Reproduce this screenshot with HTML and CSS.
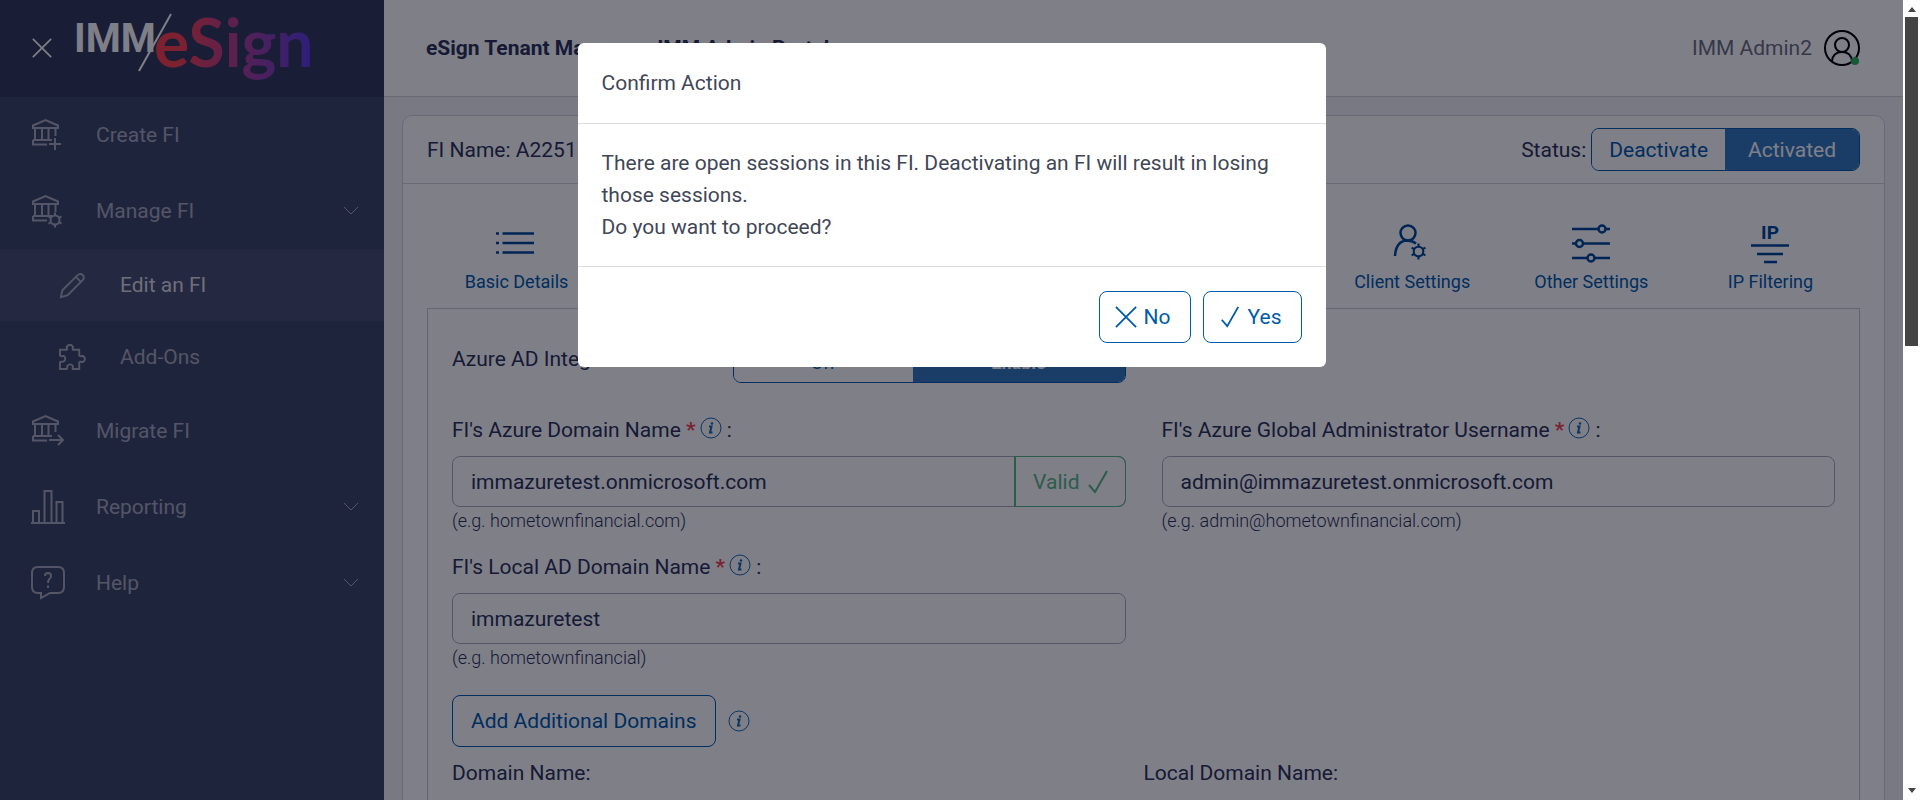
FILE: index.html
```
<!DOCTYPE html>
<html lang="en">
<head>
  <meta charset="UTF-8">
  <meta name="viewport" content="width=device-width, initial-scale=1.0">
  <title>eSign Tenant Manager - IMM Admin Portal</title>
  <link rel="stylesheet" href="styles.css">
</head>
<body>
  <!-- shared icons -->
  <svg class="defs" aria-hidden="true">
    <symbol id="bank" viewBox="0 0 34 34">
      <path d="M2 10V7.500L14.500 2 27 7.500V10ZM4 10.500V22M11 10.500V22M17.500 10.500V22M24.500 10.500V18M2 22H21M2 22V26.500H16"/>
    </symbol>
    <symbol id="chevron" viewBox="0 0 16 10"><path d="M1 1L8 8 15 1"/></symbol>
    <symbol id="check" viewBox="0 0 22 24"><path d="M2 15L8 22 20 1"/></symbol>
    <symbol id="cross" viewBox="0 0 24 24"><path d="M1 1L23 23M23 1L1 23"/></symbol>
    <symbol id="gear" viewBox="0 0 16 16">
      <circle cx="8" cy="8" r="4.500"/>
      <path d="M8 3.500V.5M8 12.500V15.500M4 5.800L1.500 4.300M12 5.800L14.500 4.300M4 10.200L1.500 11.700M12 10.200L14.500 11.700"/>
    </symbol>
    <symbol id="info" viewBox="0 0 22 22">
      <circle cx="11" cy="11" r="10"/>
      <path class="info-mark" d="M9 9.500H11.500L10 15.500H12.500"/>
      <circle class="info-dot" cx="12" cy="6.500" r="1.300"/>
    </symbol>
  </svg>

  <div class="app">
    <aside class="sidebar">
      <div class="brand">
        <button class="icon-btn" type="button" aria-label="Close menu">
          <svg class="close-icon"><use href="#cross"/></svg>
        </button>
        <svg class="logo" viewBox="0 0 236 70" role="img" aria-label="IMM/eSign">
          <defs>
            <linearGradient id="brandFill" gradientUnits="userSpaceOnUse" x1="80" y1="0" x2="232" y2="0">
              <stop offset="0" stop-color="#f8434e"/>
              <stop offset="0.150" stop-color="#f8434e"/>
              <stop offset="1" stop-color="#603fe0"/>
            </linearGradient>
          </defs>
          <text class="logo-imm" x="-2" y="39">IMM</text>
          <path class="logo-slash" d="M63 58L95 1"/>
          <text class="logo-esign" x="78" y="54">eSign</text>
        </svg>
      </div>
      <nav class="menu">
        <a class="item" href="#">
          <svg class="item-icon" viewBox="0 0 34 34"><use href="#bank" width="34" height="34"/><path d="M24 20V32M18 26H30"/></svg>
          <span>Create FI</span>
        </a>
        <a class="item" href="#">
          <svg class="item-icon" viewBox="0 0 34 34"><use href="#bank" width="34" height="34"/><use href="#gear" x="16" y="18" width="16" height="16"/></svg>
          <span>Manage FI</span>
          <svg class="chevron"><use href="#chevron"/></svg>
        </a>
        <a class="item sub active" href="#">
          <svg class="sub-icon" viewBox="0 0 28 28"><path d="M2 26L3.500 19 19 3.500Q22 .8 24.500 3 27 5.500 24.500 8.500L9 24ZM17.500 5L23 10.500"/></svg>
          <span>Edit an FI</span>
        </a>
        <a class="item sub" href="#">
          <svg class="sub-icon" viewBox="0 0 28 28"><path d="M1 6H8C9 5 8 4.500 8 3 10 0 13 0 14.500 3 14.500 4.500 13.500 5 14.500 6H21V12C22 13.500 23 12 25 12.500 27.500 14 27.500 17 25 18.500 23 19 22 17.500 21 19V26H14.500C13.500 25 14.500 24.500 14.500 23 13 20.500 10 20.500 8.500 23 8.500 24.500 9 25 8 26H1V19C2 17.500 3 19 5 18 7 16.500 7 14 5 12.500 3 12 2 13.500 1 12Z"/></svg>
          <span>Add-Ons</span>
        </a>
        <a class="item" href="#">
          <svg class="item-icon" viewBox="0 0 34 34"><use href="#bank" width="34" height="34"/><path d="M18 26H32M27 21L32 26 27 31"/></svg>
          <span>Migrate FI</span>
        </a>
        <a class="item" href="#">
          <svg class="item-icon" viewBox="0 0 34 34"><path d="M0 33H34M2 33V21H8V33M13.500 33V1H20.500V33M25.500 33V12H31.500V33"/></svg>
          <span>Reporting</span>
          <svg class="chevron"><use href="#chevron"/></svg>
        </a>
        <a class="item" href="#">
          <svg class="item-icon" viewBox="0 0 34 34"><path d="M7 1H27Q33 1 33 7V21Q33 27 27 27H19L10 32V27H7Q1 27 1 21V7Q1 1 7 1ZM14 10Q14 7 17 7 20 7 20 10 20 12 18 13.500 17 14.500 17 17M17 19.500V22"/></svg>
          <span>Help</span>
          <svg class="chevron"><use href="#chevron"/></svg>
        </a>
      </nav>
    </aside>

    <main class="main">
      <header class="topbar">
        <h1>eSign Tenant Manager - IMM Admin Portal</h1>
        <div class="user">
          <span>IMM Admin2</span>
          <svg class="avatar" viewBox="0 0 36 36">
            <circle cx="18" cy="18" r="17"/>
            <circle cx="18" cy="15" r="7"/>
            <path d="M8 31Q9 22 18 22T28 31"/>
            <circle class="online" cx="31" cy="31" r="4"/>
          </svg>
        </div>
      </header>

      <section class="card">
        <div class="card-head">
          <span>FI Name: A2251</span>
          <div class="status">
            <span>Status:</span>
            <div class="toggle">
              <button type="button">Deactivate</button>
              <button class="on" type="button">Activated</button>
            </div>
          </div>
        </div>

        <div class="tabs">
          <a class="tab" href="#">
            <svg viewBox="0 0 40 40"><path d="M-1 9.500H2M5.500 9.500H37M-1 19H2M5.500 19H37M-1 28.500H2M5.500 28.500H37"/></svg>
            Basic Details
          </a>
          <a class="tab tab-client" href="#">
            <svg viewBox="0 0 40 40"><circle cx="16" cy="9" r="7.500"/><path d="M3 32Q4 17 15 16.500 20 16.500 24 19.500"/><use href="#gear" x="18" y="19" width="17" height="17"/></svg>
            Client Settings
          </a>
          <a class="tab" href="#">
            <svg viewBox="0 0 40 40"><path d="M1 5H27.500M34.500 5H39M1 19.500H5M12 19.500H39M1 34H16.500M23.500 34H39"/><circle cx="31" cy="5" r="3.500"/><circle cx="8.500" cy="19.500" r="3.500"/><circle cx="20" cy="34" r="3.500"/></svg>
            Other Settings
          </a>
          <a class="tab" href="#">
            <svg viewBox="0 0 40 40"><text class="ip" x="20" y="15">IP</text><path d="M1 21.500H39M7 30H33M14 38H27"/></svg>
            IP Filtering
          </a>
        </div>

        <form class="panel">
          <div class="azure">
            <span>Azure AD Integration:</span>
            <div class="toggle toggle-wide">
              <button type="button">Off</button>
              <button class="on" type="button">Enable</button>
            </div>
          </div>

          <div class="grid">
            <div class="field">
              <label for="domain">FI's Azure Domain Name <b>*</b><svg class="info"><use href="#info"/></svg> :</label>
              <div class="input-group">
                <input id="domain" type="text" value="immazuretest.onmicrosoft.com">
                <span class="valid">Valid <svg><use href="#check"/></svg></span>
              </div>
              <small>(e.g. hometownfinancial.com)</small>
            </div>
            <div class="field">
              <label for="admin">FI's Azure Global Administrator Username <b>*</b><svg class="info"><use href="#info"/></svg> :</label>
              <div class="input-group">
                <input id="admin" type="text" value="admin@immazuretest.onmicrosoft.com">
              </div>
              <small>(e.g. admin@hometownfinancial.com)</small>
            </div>
            <div class="field">
              <label for="local">FI's Local AD Domain Name <b>*</b><svg class="info"><use href="#info"/></svg> :</label>
              <div class="input-group">
                <input id="local" type="text" value="immazuretest">
              </div>
              <small>(e.g. hometownfinancial)</small>
            </div>
          </div>

          <div class="add">
            <button class="btn" type="button">Add Additional Domains</button>
            <svg class="info"><use href="#info"/></svg>
          </div>

          <div class="domains">
            <span>Domain Name:</span>
            <span>Local Domain Name:</span>
          </div>
        </form>
      </section>
    </main>

    <div class="overlay">
      <div class="modal" role="dialog" aria-labelledby="modalTitle">
        <h2 class="modal-head" id="modalTitle">Confirm Action</h2>
        <div class="modal-body">
          There are open sessions in this FI. Deactivating an FI will result in losing those sessions.<br>
          Do you want to proceed?
        </div>
        <div class="modal-foot">
          <button class="btn btn-icon" type="button"><svg><use href="#cross"/></svg>No</button>
          <button class="btn btn-icon" type="button"><svg><use href="#check"/></svg>Yes</button>
        </div>
      </div>
    </div>
  </div>

  <div class="scrollbar">
    <svg viewBox="0 0 8 5"><path d="M0 5L4 0 8 5Z"/></svg>
    <div class="track"><div class="thumb"></div></div>
    <svg viewBox="0 0 8 5"><path d="M0 0L4 5 8 0Z"/></svg>
  </div>
</body>
</html>
```
FILE: styles.css
```
* {
  box-sizing: border-box;
}

body {
  margin: 0;
  height: 100vh;
  display: flex;
  overflow: hidden;
  font-family: Roboto, sans-serif;
  font-size: 21px;
  line-height: 32px;
  color: #2d3557;
  background: #fff;
}

button,
input {
  font: inherit;
  margin: 0;
}

a {
  text-decoration: none;
}

svg {
  fill: none;
  stroke: currentColor;
  stroke-width: 2;
  flex-shrink: 0;
}

.defs {
  position: absolute;
  width: 0;
  height: 0;
}

.app {
  position: relative;
  flex: 1;
  display: flex;
  min-width: 0;
  overflow: hidden;
}

/* sidebar */
.sidebar {
  width: 384px;
  flex-shrink: 0;
  background: #3e4868;
  color: #a8abba;
}

.brand {
  height: 97px;
  background: #323b5b;
  display: flex;
  align-items: center;
  padding: 0 0 2px 32px;
  gap: 24px;
}

.icon-btn {
  border: 0;
  padding: 0;
  background: none;
  color: #fff;
  display: flex;
}

.close-icon {
  width: 20px;
  height: 20px;
}

.logo {
  width: 236px;
  height: 70px;
  overflow: visible;
}

.logo text {
  stroke: none;
}

.logo-imm {
  fill: #fff;
  font-weight: 700;
  font-size: 40px;
}

.logo-slash {
  stroke: #fff;
}

.logo-esign {
  fill: url(#brandFill);
  font-family: Lato, sans-serif;
  font-weight: 700;
  font-size: 66px;
}

.item {
  height: 76px;
  display: flex;
  align-items: center;
  padding: 0 25px 0 31px;
  color: inherit;
}

.item span {
  flex: 1;
}

.item-icon {
  width: 34px;
  height: 34px;
  margin-right: 31px;
}

.sub {
  height: 72px;
  padding-left: 59px;
}

.sub-icon {
  width: 27px;
  height: 27px;
  margin-right: 34px;
}

.active {
  background: #485171;
}

.active span {
  color: #dcdde3;
}

.chevron {
  width: 16px;
  height: 10px;
  stroke-width: 1;
}

/* main */
.main {
  flex: 1;
  min-width: 0;
  background: #f2f2f4;
}

.topbar {
  height: 97px;
  display: flex;
  align-items: center;
  justify-content: space-between;
  padding: 0 43px 1px 42px;
  background: #fff;
  border-bottom: 1px solid #d5d5dd;
}

.topbar h1 {
  margin: 0;
  font-size: 21px;
  font-weight: 700;
}

.user {
  display: flex;
  align-items: center;
  gap: 12px;
  color: #6d7183;
}

.avatar {
  width: 36px;
  height: 36px;
  color: #000;
}

.avatar .online {
  fill: #2bb55c;
  stroke: none;
}

.card {
  margin: 18px;
  background: #fff;
  border: 1px solid #d5d5dd;
  border-radius: 10px;
}

.card-head {
  height: 68px;
  display: flex;
  align-items: center;
  justify-content: space-between;
  padding: 0 24px;
  border-bottom: 1px solid #d5d5dd;
}

.status {
  display: flex;
  align-items: center;
  gap: 5px;
}

.toggle {
  display: flex;
  height: 43px;
  border: 1px solid #005cab;
  border-radius: 8px;
  overflow: hidden;
}

.toggle button {
  border: 0;
  padding: 0 17px;
  background: #fff;
  color: #005cab;
}

.toggle .on {
  padding: 0 23px;
  background: #357abd;
  color: #fff;
}

.tabs {
  display: grid;
  grid-template-columns: repeat(8, 1fr);
  margin: 0 24px;
  padding: 40px 0 12px;
}

.tab {
  display: flex;
  flex-direction: column;
  align-items: center;
  gap: 4px;
  font-size: 18px;
  line-height: 28px;
  color: #005cab;
}

.tab-client {
  grid-column: 6;
}

.tab svg {
  width: 40px;
  height: 40px;
  overflow: visible;
  color: #004a97;
  stroke-width: 2.500;
}

.tab use {
  stroke-width: 2;
}

.ip {
  fill: currentColor;
  stroke: none;
  font-size: 19px;
  font-weight: 700;
  text-anchor: middle;
}

.panel {
  margin: 0 24px;
  padding: 24px 24px 60px;
  border: 1px solid #c9c9d2;
}

.azure {
  display: flex;
  justify-content: space-between;
  align-items: flex-end;
  width: calc(50% - 18px);
  height: 50px;
}

.azure > span {
  line-height: 48px;
}

.toggle-wide {
  width: 393px;
}

.toggle-wide button {
  flex: 11 1 0;
  padding: 2px 0 0;
  font-size: 18px;
}

.toggle-wide .on {
  flex: 13 1 0;
  padding: 2px 0 0;
  font-weight: 700;
}

.grid {
  display: grid;
  grid-template-columns: 1fr 1fr;
  gap: 17px 36px;
  padding-top: 31px;
}

.field {
  display: flex;
  flex-direction: column;
}

.field b {
  margin-right: 4px;
  color: #f2464f;
}

.field small {
  font-size: 18px;
  font-weight: 300;
  line-height: 27px;
}

.info {
  width: 22px;
  height: 22px;
  stroke-width: 1;
  vertical-align: -2px;
  color: #1a6bb3;
}

.info-mark {
  stroke-width: 2;
}

.info-dot {
  fill: currentColor;
  stroke: none;
}

.input-group {
  display: flex;
  height: 51px;
  margin-top: 10px;
  border: 1px solid #a9aab8;
  border-radius: 8px;
}

.input-group input {
  flex: 1;
  min-width: 0;
  border: 0;
  border-radius: 8px;
  padding: 0 18px;
  background: #fff;
  color: #2d3557;
}

.valid {
  display: flex;
  align-items: center;
  gap: 7px;
  margin: -1px;
  padding: 0 16px 0 17px;
  border: 1px solid #5cb884;
  border-left-width: 2px;
  border-radius: 0 8px 8px 0;
  color: #5cb884;
}

.valid svg {
  width: 22px;
  height: 24px;
}

.btn {
  height: 52px;
  padding: 0 18px;
  border: 1px solid #005cab;
  border-radius: 8px;
  background: #fff;
  color: #005cab;
}

.add {
  display: flex;
  align-items: center;
  gap: 12px;
  padding: 24px 0 10px;
}

.domains {
  display: grid;
  grid-template-columns: 1fr 1fr;
}

/* confirm dialog */
.overlay {
  position: absolute;
  inset: 0;
  background: rgba(0, 0, 18, 0.5);
}

.modal {
  width: 748px;
  margin: 43px auto;
  background: #fff;
  color: #3f4757;
  border-radius: 6px;
}

.modal-head {
  margin: 0;
  padding: 24px;
  border-bottom: 1px solid #dcdce0;
  font-size: 21px;
  font-weight: 400;
}

.modal-body {
  padding: 23px 24px;
  border-bottom: 1px solid #dcdce0;
}

.modal-foot {
  display: flex;
  justify-content: flex-end;
  gap: 12px;
  padding: 24px;
}

.btn-icon {
  display: flex;
  align-items: center;
  gap: 7px;
  padding: 0 19px 0 15px;
}

.btn-icon svg {
  width: 22px;
  height: 22px;
}

/* page scrollbar */
.scrollbar {
  width: 17px;
  display: flex;
  flex-direction: column;
  align-items: center;
  background: #fff;
  padding: 7px 0;
}

.scrollbar svg {
  width: 8px;
  height: 5px;
  fill: #444;
  stroke: none;
}

.track {
  flex: 1;
  padding: 5px 0;
}

.thumb {
  width: 13px;
  height: 43%;
  background: #444;
}
```
